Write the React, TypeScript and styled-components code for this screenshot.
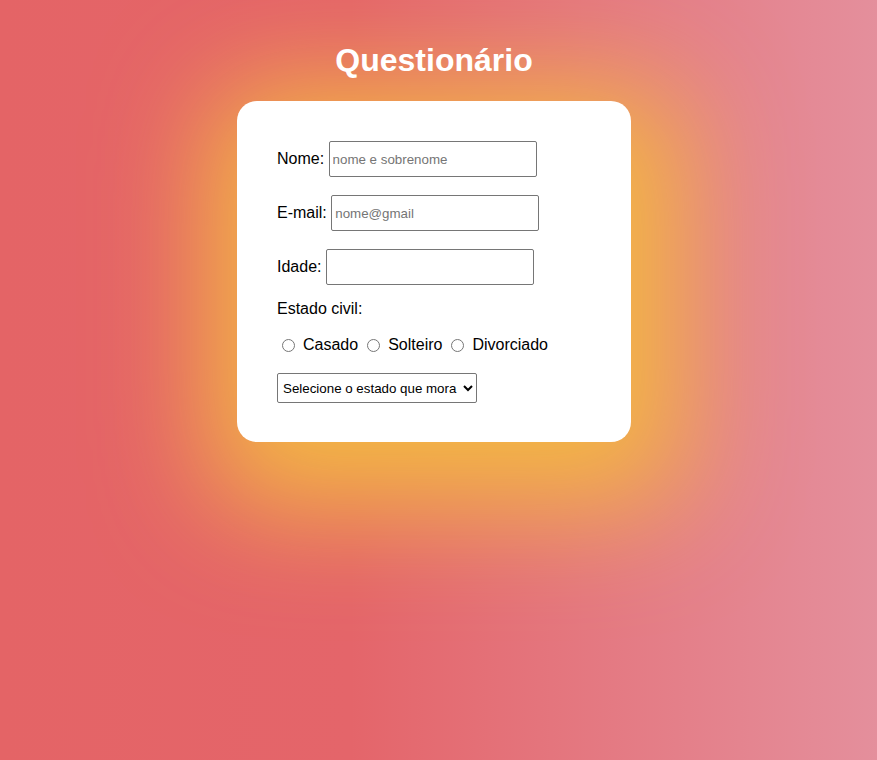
import React from "react";
import styled, { createGlobalStyle } from "styled-components";

const GlobalStyle = createGlobalStyle`
  html, body {
    margin: 0;
    padding: 0;
    min-height: 100%;
  }
  body {
    min-height: 760px;
    background: linear-gradient(to right, #e46466 0%, #e4656a 40%, #e48f9c 100%);
    font-family: "Liberation Sans", Arial, sans-serif;
  }
`;

const Page = styled.main`
  display: flex;
  flex-direction: column;
  align-items: center;
  padding: 42px 9px 0 0;
`;

const Title = styled.h1`
  position: relative;
  z-index: 1;
  margin: 0 0 22px;
  font-size: 32px;
  font-weight: 700;
  color: #ffffff;
  line-height: 37px;
`;

const Card = styled.form`
  width: 394px;
  box-sizing: border-box;
  background: #ffffff;
  border-radius: 20px;
  padding: 40px 40px 39px;
  display: flex;
  flex-direction: column;
  align-items: flex-start;
  box-shadow: 12px 26px 110px 42px #f3b744;
  color: #000;
  font-size: 16px;
`;

const FieldRow = styled.div<{ $gap?: number }>`
  display: flex;
  align-items: center;
  gap: 4.45px;
  margin-bottom: ${(p) => p.$gap ?? 0}px;
`;

const Label = styled.label`
  font-size: 16px;
  line-height: 18px;
`;

const TextInput = styled.input`
  width: 208px;
  height: 36px;
  box-sizing: border-box;
  border: 1px solid #767676;
  border-radius: 2px;
  padding: 1px 3px;
  font-family: "Liberation Sans", Arial, sans-serif;
  font-size: 13.33px;
  &::placeholder {
    color: #757575;
  }
`;

const SectionLabel = styled.div`
  font-size: 16px;
  line-height: 18px;
  margin: 15px 0 18px;
`;

const RadioRow = styled.div`
  display: flex;
  align-items: center;
  font-size: 16px;
  line-height: 18px;
  margin-bottom: 19px;
`;

const Radio = styled.input<{ $first?: boolean }>`
  width: 13px;
  height: 13px;
  margin: 0 8px 0 ${(p) => (p.$first ? 5 : 9)}px;
`;

const RadioText = styled.label``;

const Select = styled.select`
  width: 200px;
  height: 30px;
  box-sizing: border-box;
  border: 1px solid #767676;
  border-radius: 2px;
  font-family: "Liberation Sans", Arial, sans-serif;
  font-size: 13.33px;
  color: #000;
  background: #fff;
  padding: 0 1px;
`;

export default function App() {
  return (
    <>
      <GlobalStyle />
      <Page>
        <Title>Questionário</Title>
        <Card onSubmit={(e) => e.preventDefault()}>
          <FieldRow $gap={18}>
            <Label htmlFor="nome">Nome:</Label>
            <TextInput id="nome" type="text" placeholder="nome e sobrenome" />
          </FieldRow>
          <FieldRow $gap={18}>
            <Label htmlFor="email">E-mail:</Label>
            <TextInput id="email" type="email" placeholder="nome@gmail" />
          </FieldRow>
          <FieldRow>
            <Label htmlFor="idade">Idade:</Label>
            <TextInput id="idade" type="number" />
          </FieldRow>
          <SectionLabel>Estado civil:</SectionLabel>
          <RadioRow>
            <Radio $first type="radio" name="estado" id="casado" />
            <RadioText htmlFor="casado">Casado</RadioText>
            <Radio type="radio" name="estado" id="solteiro" />
            <RadioText htmlFor="solteiro">Solteiro</RadioText>
            <Radio type="radio" name="estado" id="divorciado" />
            <RadioText htmlFor="divorciado">Divorciado</RadioText>
          </RadioRow>
          <Select defaultValue="">
            <option value="" disabled>
              Selecione o estado que mora
            </option>
            <option value="SP">São Paulo</option>
            <option value="RJ">Rio de Janeiro</option>
            <option value="MG">Minas Gerais</option>
          </Select>
        </Card>
      </Page>
    </>
  );
}
